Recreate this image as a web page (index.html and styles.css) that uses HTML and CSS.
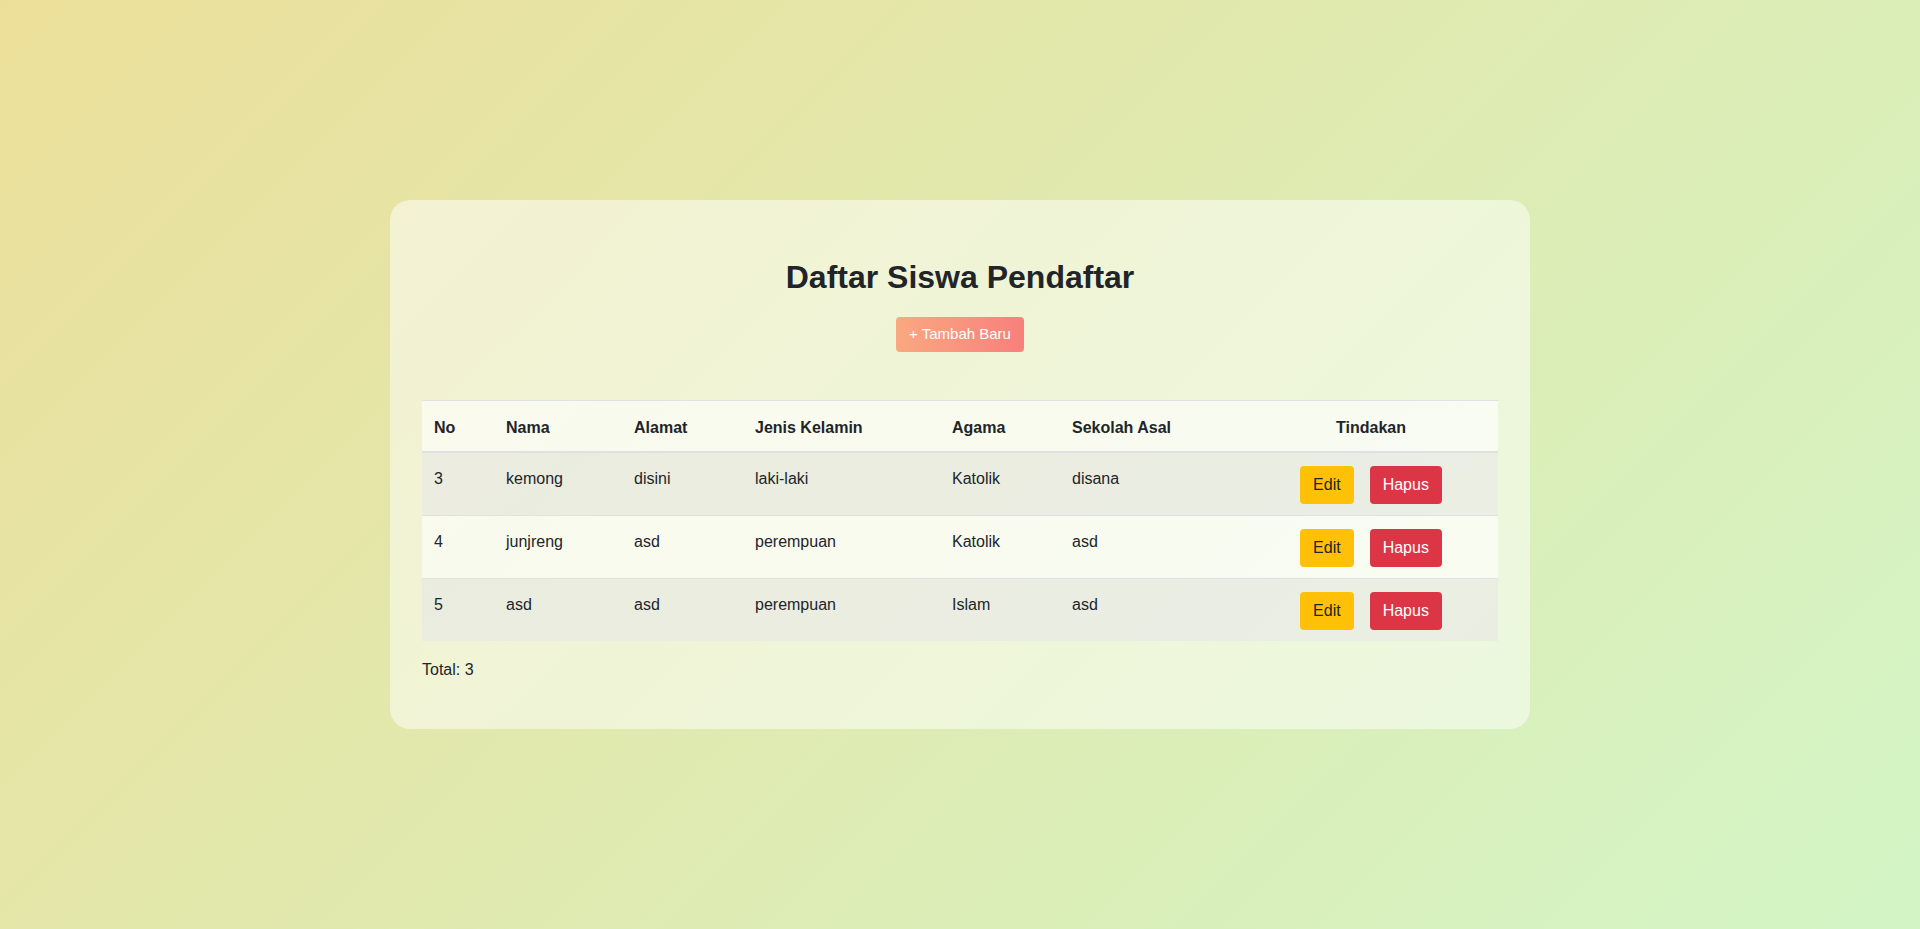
FILE: index.html
```html
<!DOCTYPE html>
<html lang="id">
<head>
<meta charset="utf-8">
<title>Daftar Siswa Pendaftar</title>
<link rel="stylesheet" href="styles.css">
</head>
<body>
  <main class="page">
    <section class="card">
      <h2 class="title">Daftar Siswa Pendaftar</h2>
      <div class="top-actions">
        <a class="btn btn-add" href="#">+ Tambah Baru</a>
      </div>
      <table class="data-table">
        <colgroup>
          <col class="c-no">
          <col class="c-nama">
          <col class="c-alamat">
          <col class="c-jk">
          <col class="c-agama">
          <col class="c-sekolah">
          <col class="c-aksi">
        </colgroup>
        <thead>
          <tr>
            <th>No</th>
            <th>Nama</th>
            <th>Alamat</th>
            <th>Jenis Kelamin</th>
            <th>Agama</th>
            <th>Sekolah Asal</th>
            <th class="th-aksi">Tindakan</th>
          </tr>
        </thead>
        <tbody>
          <tr class="odd">
            <td>3</td>
            <td>kemong</td>
            <td>disini</td>
            <td>laki-laki</td>
            <td>Katolik</td>
            <td>disana</td>
            <td class="td-aksi"><div class="aksi"><a class="btn btn-edit" href="#">Edit</a><a class="btn btn-hapus" href="#">Hapus</a></div></td>
          </tr>
          <tr>
            <td>4</td>
            <td>junjreng</td>
            <td>asd</td>
            <td>perempuan</td>
            <td>Katolik</td>
            <td>asd</td>
            <td class="td-aksi"><div class="aksi"><a class="btn btn-edit" href="#">Edit</a><a class="btn btn-hapus" href="#">Hapus</a></div></td>
          </tr>
          <tr class="odd">
            <td>5</td>
            <td>asd</td>
            <td>asd</td>
            <td>perempuan</td>
            <td>Islam</td>
            <td>asd</td>
            <td class="td-aksi"><div class="aksi"><a class="btn btn-edit" href="#">Edit</a><a class="btn btn-hapus" href="#">Hapus</a></div></td>
          </tr>
        </tbody>
      </table>
      <p class="total">Total: 3</p>
    </section>
  </main>
</body>
</html>
```

FILE: styles.css
```css
* {
  box-sizing: border-box;
}

html, body {
  margin: 0;
  padding: 0;
}

body {
  font-family: "Liberation Sans", Arial, sans-serif;
  font-size: 16px;
  line-height: 1.5;
  color: #212529;
  background: linear-gradient(135deg, #ecdf9a 0%, #d3f5c6 100%);
  min-height: 100vh;
}

.page {
  min-height: 100vh;
  display: flex;
  align-items: center;
  justify-content: center;
}

.card {
  width: 1140px;
  padding: 32px;
  background: rgba(255, 255, 255, 0.5);
  border-radius: 20px;
}

.title {
  margin: 26px 0 21px;
  font-size: 32px;
  line-height: 1.2;
  font-weight: 700;
  text-align: center;
  color: #212529;
}

.top-actions {
  display: flex;
  justify-content: center;
  margin-bottom: 48px;
}

.btn {
  display: inline-block;
  text-decoration: none;
  border-radius: 4px;
  font-size: 16px;
  line-height: 24px;
  padding: 7px 13px;
}

.btn-add {
  font-size: 15px;
  line-height: 22.5px;
  padding: 6px 13px;
  color: #ffffff;
  background: linear-gradient(90deg, #faa881 0%, #f8807c 100%);
}

.data-table {
  width: 100%;
  border-collapse: collapse;
  table-layout: fixed;
  margin-bottom: 17px;
}

.c-no { width: 72px; }
.c-nama { width: 128px; }
.c-alamat { width: 121px; }
.c-jk { width: 197px; }
.c-agama { width: 120px; }
.c-sekolah { width: 184px; }
.c-aksi { width: 254px; }

.data-table th,
.data-table td {
  text-align: left;
  padding: 14px 12px 10px;
  background: rgba(255, 255, 255, 0.6);
  vertical-align: top;
}

.data-table th {
  font-weight: 700;
  padding: 15px 12px 11px;
  border-top: 1px solid #dee2e6;
  border-bottom: 2px solid #dee2e6;
}

.data-table td {
  border-bottom: 1px solid #dee2e6;
}

.data-table tbody tr:last-child td {
  border-bottom: none;
}

.data-table tr.odd td {
  box-shadow: inset 0 0 0 9999px rgba(0, 0, 0, 0.055);
}

.data-table .th-aksi {
  text-align: center;
}

.data-table .td-aksi {
  vertical-align: middle;
  padding: 13px 12px 11px;
}

.aksi {
  display: flex;
  justify-content: center;
  gap: 16px;
}

.btn-edit {
  background: #ffc107;
  color: #212529;
}

.btn-hapus {
  background: #dc3545;
  color: #ffffff;
}

.total {
  margin: 0 0 15px;
}
```
